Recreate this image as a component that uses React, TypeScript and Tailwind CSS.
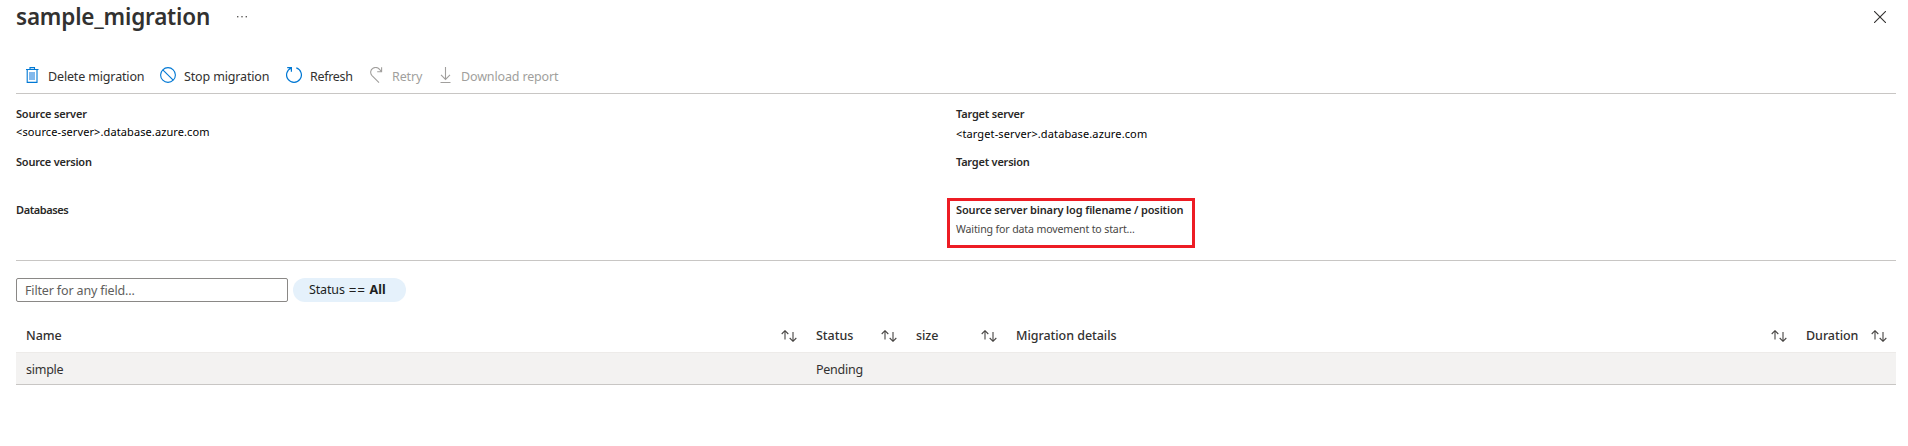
import type { ReactNode } from "react";

function SortIcon() {
  return (
    <svg className="h-[12px] w-[16px] shrink-0" viewBox="0 0 16 12" fill="none" stroke="#484644" strokeWidth="1.1">
      <path d="M4 9.5V0.8M0.7 4L4 0.7L7.3 4" />
      <path d="M12 2V11.2M8.7 8L12 11.3L15.3 8" />
    </svg>
  );
}

function TrashIcon() {
  return (
    <svg className="h-[16px] w-[14px]" viewBox="0 0 14 16" fill="none" stroke="#0078d4" strokeWidth="1.1">
      <rect x="3" y="5" width="6" height="8" fill="#83b9ec" stroke="none" />
      <path d="M0 2.5H12.5M4 2.3V0.6H8.5V2.3M1.2 2.5V15.4H11V2.5" />
    </svg>
  );
}

function StopIcon() {
  return (
    <svg className="h-[16px] w-[16px]" viewBox="0 0 16 16" fill="none" stroke="#0078d4" strokeWidth="1.1">
      <circle cx="8" cy="8" r="7.4" />
      <path d="M2.8 2.8L13.2 13.2" />
    </svg>
  );
}

function RefreshIcon() {
  return (
    <svg className="h-[16px] w-[16px]" viewBox="0 0 16 16" fill="none" stroke="#0078d4" strokeWidth="1.2">
      <path d="M10.3 0.9A7.4 7.4 0 1 1 5.4 1M1.2 0.7H5.4V4.8" />
    </svg>
  );
}

function RetryIcon() {
  return (
    <svg className="h-[16px] w-[13px]" viewBox="0 0 13 16" fill="none" stroke="#a19f9d" strokeWidth="1.1">
      <path d="M9 15.6L2 8.6C-0.2 6.2 0.4 2.7 3 1.2C5.6 -0.1 8.2 0.6 9.8 2.6L11.6 4.6M11.6 0.3V4.8H7.2" />
    </svg>
  );
}

function DownloadIcon() {
  return (
    <svg className="h-[16px] w-[12px]" viewBox="0 0 12 16" fill="none" stroke="#a19f9d" strokeWidth="1.1">
      <path d="M5.5 0V12.2M1 7.9L5.5 12.4L10 7.9M0.5 15.5H10.5" />
    </svg>
  );
}

function Command({ icon, children, className }: { icon: ReactNode; children: ReactNode; className: string }) {
  return (
    <button className={`flex h-[18px] shrink-0 items-center whitespace-nowrap text-left ${className}`}>
      {icon}
      <span className="mt-[4px] leading-[20px]">{children}</span>
    </button>
  );
}

const label = "h-[20px] text-[11px] leading-[20px] font-semibold whitespace-nowrap text-[#292827]";

export default function App() {
  return (
    <main className="h-[446px] w-[1908px] overflow-hidden bg-white pr-[12px] pl-[16px] font-['Noto_Sans','Open_Sans',sans-serif] text-[12.5px] tracking-[-0.15px] text-[#323130]">
      <header className="flex h-[66px] items-start">
        <h1 className="w-[220px] text-[22.5px] leading-[34px] font-semibold tracking-[-0.2px] text-[#323130]">sample_migration</h1>
        <svg className="mt-[15px] h-[3px] w-[12px]" viewBox="0 0 12 3" fill="#605e5c">
          <rect x="1" y="1" width="1.4" height="1.4" />
          <rect x="5.3" y="1" width="1.4" height="1.4" />
          <rect x="9.6" y="1" width="1.4" height="1.4" />
        </svg>
        <svg className="mt-[11px] mr-[10px] ml-auto h-[12px] w-[12px]" viewBox="0 0 12 12" stroke="#323130" strokeWidth="1.1">
          <path d="M0 0L12 12M12 0L0 12" />
        </svg>
      </header>

      <nav className="flex h-[28px] items-start border-b border-[#c8c6c4] pl-[10px]">
        <Command className="w-[134px] gap-[8px]" icon={<TrashIcon />}>Delete migration</Command>
        <Command className="w-[126px] gap-[8px]" icon={<StopIcon />}>Stop migration</Command>
        <Command className="w-[84px] gap-[8px] tracking-[-0.3px]" icon={<RefreshIcon />}>Refresh</Command>
        <Command className="w-[70px] gap-[9px] text-[#a19f9d]" icon={<RetryIcon />}>Retry</Command>
        <Command className="gap-[9px] text-[#a19f9d]" icon={<DownloadIcon />}>Download report</Command>
      </nav>

      <section className="grid h-[167px] grid-cols-[940px_1fr] border-b border-[#c8c6c4] pt-[10px] text-[11px]">
        <dl>
          <div className="h-[48px] tracking-[-0.18px]">
            <dt className={label}>Source server</dt>
            <dd className="leading-[16px] tracking-[0.1px] text-black">&lt;source-server&gt;.database.azure.com</dd>
          </div>
          <div className="h-[48px] tracking-[-0.22px]">
            <dt className={label}>Source version</dt>
          </div>
          <div className="h-[48px] tracking-[-0.4px]">
            <dt className={label}>Databases</dt>
          </div>
        </dl>
        <dl>
          <div className="h-[48px] tracking-[-0.2px]">
            <dt className={label}>Target server</dt>
            <dd className="pt-[2px] leading-[16px] tracking-[0.12px] text-black">&lt;target-server&gt;.database.azure.com</dd>
          </div>
          <div className="h-[48px] tracking-[-0.22px]">
            <dt className={label}>Target version</dt>
          </div>
          <div className="mt-[-2px] ml-[-9px] h-[50px] w-[248px] border-3 border-[#ed1c24] pl-[6px] tracking-[-0.14px]">
            <dt className={`mt-[-1px] ${label}`}>Source server binary log filename / position</dt>
            <dd className="text-[10.6px] leading-[18px] text-[#484644]">Waiting for data movement to start...</dd>
          </div>
        </dl>
      </section>

      <div className="flex gap-[5px] pt-[17px]">
        <input
          className="h-[24px] w-[272px] rounded-[2px] border border-[#8a8886] bg-white px-[8px] placeholder:text-[#605e5c]"
          placeholder="Filter for any field..."
        />
        <button className="flex h-[24px] w-[113px] items-center rounded-full bg-[#e5f1fb] pt-[1px] pl-[16px] whitespace-pre text-[#201f1e]">
          <span>Status</span>
          <span className="text-[13.5px] tracking-[0.6px]"> == </span>
          <b className="tracking-normal">All</b>
        </button>
      </div>

      <table className="mt-[18px] w-[1880px] table-fixed border-separate border-spacing-0 text-left">
        <colgroup>
          <col className="w-[790px]" />
          <col className="w-[100px]" />
          <col className="w-[100px]" />
          <col className="w-[790px]" />
          <col className="w-[100px]" />
        </colgroup>
        <thead>
          <tr>
            {["Name", "Status", "size", "Migration details", "Duration"].map((name) => (
              <th key={name} className="h-[33px] border-b border-[#edebe9] p-0 pr-[9px] pl-[10px] font-medium tracking-[-0.05px]">
                <div className="flex items-center justify-between whitespace-nowrap">
                  <span>{name}</span>
                  <SortIcon />
                </div>
              </th>
            ))}
          </tr>
        </thead>
        <tbody>
          <tr className="bg-[#f3f2f1]">
            {["simple", "Pending", "", "", ""].map((value, index) => (
              <td key={index} className="h-[32px] border-b border-[#c8c6c4] p-0 pt-[3px] pl-[10px] tracking-[-0.25px]">
                {value}
              </td>
            ))}
          </tr>
        </tbody>
      </table>
    </main>
  );
}
